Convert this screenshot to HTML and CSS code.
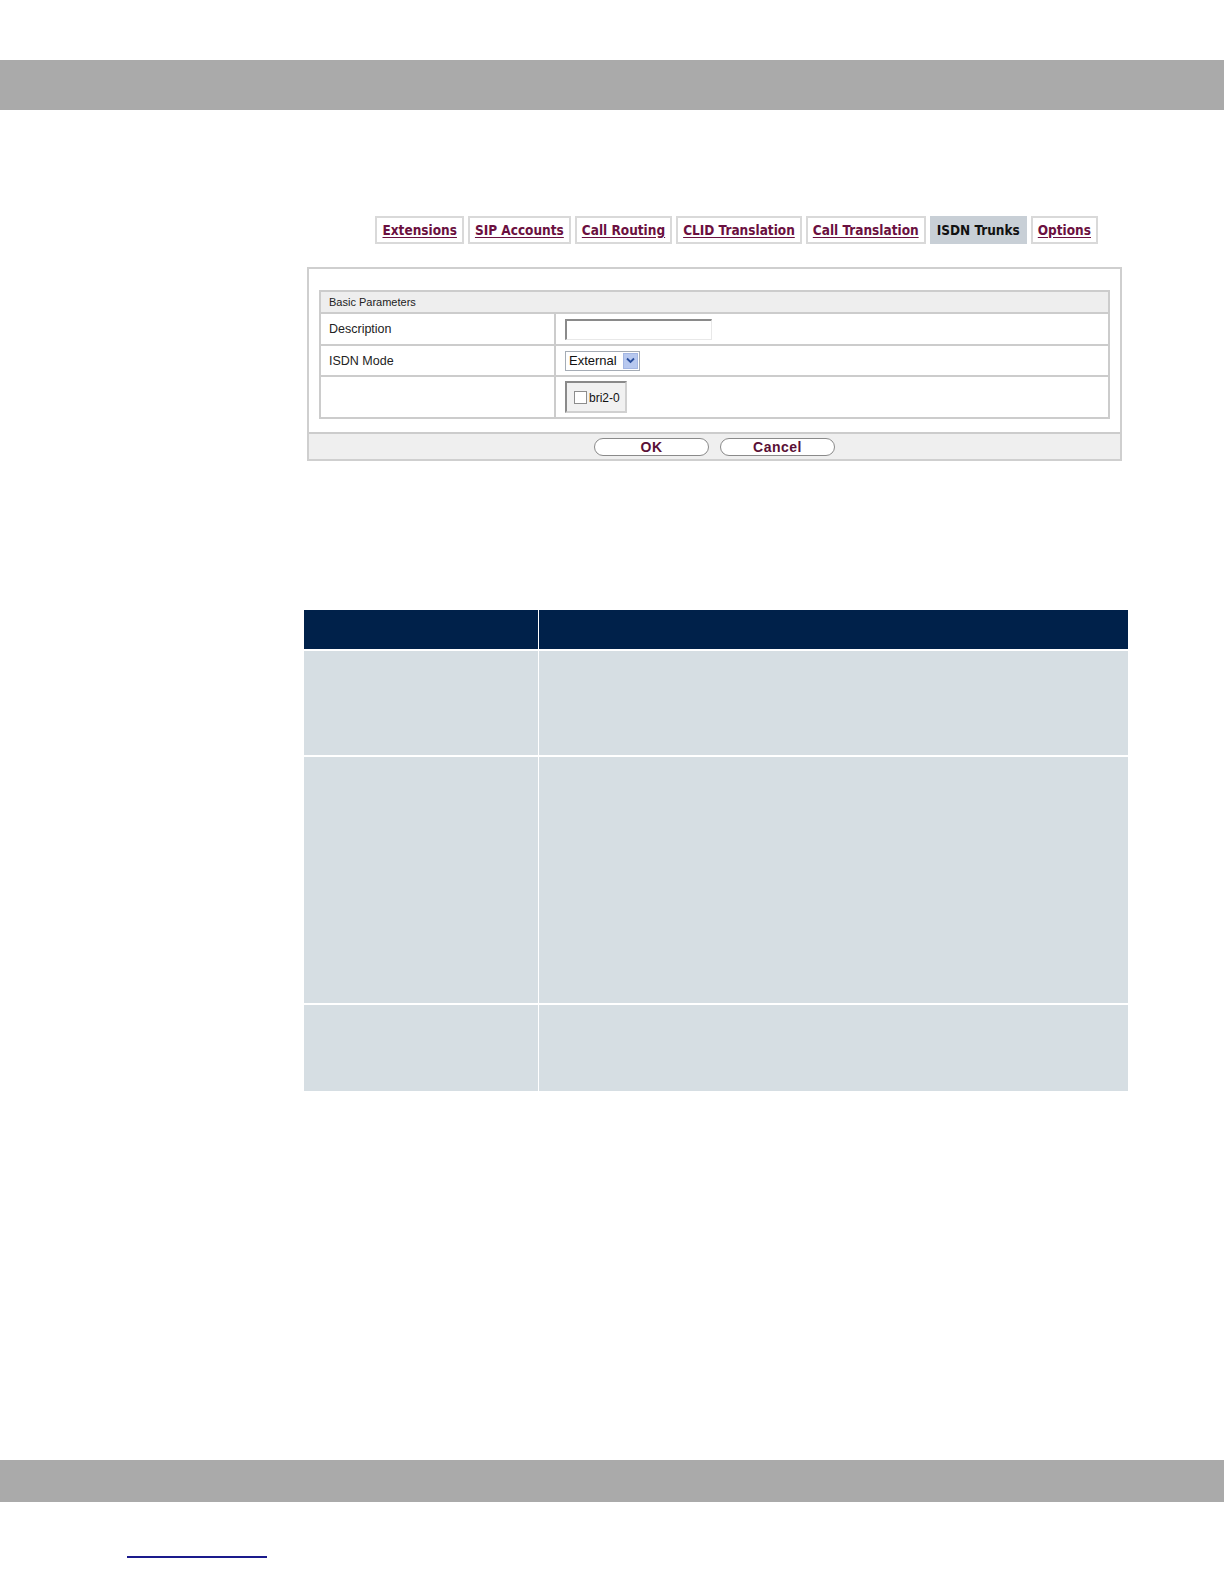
FILE: index.html
```html
<!DOCTYPE html>
<html>
<head>
<meta charset="utf-8">
<title>ISDN Trunks</title>
<link rel="stylesheet" href="styles.css">
</head>
<body>
<div class="top-gap"></div>
<div class="bar"></div>
<div class="content">
  <nav class="tabs">
    <a class="tab" href="#">Extensions</a>
    <a class="tab" href="#">SIP Accounts</a>
    <a class="tab" href="#">Call Routing</a>
    <a class="tab" href="#">CLID Translation</a>
    <a class="tab" href="#">Call Translation</a>
    <span class="tab active">ISDN Trunks</span>
    <a class="tab" href="#">Options</a>
  </nav>
  <div class="formbox">
    <div class="formbody">
      <table class="params">
        <tr><th colspan="2" class="ph">Basic Parameters</th></tr>
        <tr class="r1"><td class="lbl">Description</td><td class="val"><span class="textinput"></span></td></tr>
        <tr class="r2"><td class="lbl">ISDN Mode</td><td class="val"><span class="select"><span class="seltext">External</span><span class="selbtn"><svg width="9" height="7" viewBox="0 0 9 7"><path d="M1 1.5 L4.5 5 L8 1.5" fill="none" stroke="#2a4f9e" stroke-width="1.8"/></svg></span></span></td></tr>
        <tr class="r3"><td class="lbl"></td><td class="val"><span class="cbgroup"><span class="cb"></span><span class="cbl">bri2-0</span></span></td></tr>
      </table>
    </div>
    <div class="formfoot">
      <span class="btn">OK</span>
      <span class="btn">Cancel</span>
    </div>
  </div>
  <table class="dtable">
    <tr class="dh"><td class="c1"></td><td class="c2"></td></tr>
    <tr class="d1"><td class="c1"></td><td class="c2"></td></tr>
    <tr class="d2"><td class="c1"></td><td class="c2"></td></tr>
    <tr class="d3"><td class="c1"></td><td class="c2"></td></tr>
  </table>
</div>
<div class="bar bottom"></div>
<div class="footer"><a class="flink" href="#"></a></div>
</body>
</html>
```

FILE: styles.css
```css
html, body {
  margin: 0;
  padding: 0;
  background: #ffffff;
  font-family: "Liberation Sans", Arial, sans-serif;
}
.top-gap { height: 60px; }
.bar {
  height: 50px;
  background: #aaaaaa;
}
.bar.bottom {
  height: 42px;
}
.content {
  padding: 106px 0 0 307px;
  width: 815px;
  height: 1244px;
  box-sizing: content-box;
}
.tabs {
  display: flex;
  justify-content: flex-end;
  gap: 4px;
  padding-right: 24px;
  height: 28px;
}
.tab {
  display: flex;
  align-items: center;
  box-sizing: border-box;
  height: 28px;
  padding: 0 5px;
  border: 2px solid #d9d9d9;
  background: #ffffff;
  color: #6b1040;
  font-family: "DejaVu Sans Condensed", "DejaVu Sans", sans-serif;
  font-weight: bold;
  font-size: 13.5px;
  text-decoration: underline;
  text-underline-offset: 2px;
}
.tab.active {
  background: #c8cfd6;
  border-color: #c8cfd6;
  color: #111111;
  text-decoration: none;
}
.formbox {
  margin-top: 23px;
  border: 2px solid #cfcfcf;
  box-sizing: border-box;
  height: 194px;
  display: flex;
  flex-direction: column;
}
.formbody {
  padding: 21px 10px 0 10px;
  height: 163px;
  box-sizing: border-box;
}
.params {
  width: 100%;
  border-collapse: collapse;
  border: 2px solid #cccccc;
}
.params td, .params th {
  border: 2px solid #cccccc;
  padding: 0;
}
.ph {
  height: 20px;
  background: #eeeeee;
  text-align: left;
  font-weight: normal;
  font-size: 11px;
  color: #222;
  padding-left: 8px !important;
}
.lbl {
  width: 225px;
  font-size: 12.5px;
  color: #222;
  padding-left: 8px !important;
}
.val {
  padding-left: 9px !important;
}
.r1 { height: 32px; }
.r2 { height: 31px; }
.r3 { height: 42px; }
.textinput {
  display: block;
  width: 147px;
  height: 21px;
  box-sizing: border-box;
  border-top: 2px solid #8a8a8a;
  border-left: 2px solid #8a8a8a;
  border-right: 1px solid #e8e8e8;
  border-bottom: 1px solid #e8e8e8;
  background: #fff;
}
.select {
  display: inline-flex;
  align-items: center;
  height: 20px;
  width: 75px;
  box-sizing: border-box;
  border: 1px solid #a5acb5;
  background: #fff;
  vertical-align: middle;
}
.seltext {
  flex: 1;
  font-size: 13px;
  color: #111;
  padding-left: 3px;
}
.selbtn {
  width: 15px;
  height: 16px;
  margin-right: 1px;
  background: #b7c8ef;
  border: 1px solid #a3b6e3;
  box-sizing: border-box;
  display: flex;
  align-items: center;
  justify-content: center;
}
.cbgroup {
  display: inline-flex;
  align-items: center;
  height: 32px;
  width: 62px;
  box-sizing: border-box;
  border: 2px solid #8a8a8a;
  border-right-color: #d0d0d0;
  border-bottom-color: #d0d0d0;
  background: #f1f1f1;
  padding-left: 7px;
  gap: 2px;
  vertical-align: middle;
}
.cb {
  width: 11px;
  height: 11px;
  border: 1px solid #8d8d8d;
  background: #fff;
}
.cbl {
  font-size: 12px;
  color: #111;
  padding-top: 2px;
}
.formfoot {
  flex: 1;
  border-top: 2px solid #cccccc;
  background: #efefef;
  display: flex;
  align-items: center;
  justify-content: center;
  gap: 11px;
}
.btn {
  width: 115px;
  height: 18px;
  box-sizing: border-box;
  border: 1px solid #8a8a8a;
  border-radius: 10px;
  background: #ffffff;
  color: #5a1036;
  font-weight: bold;
  font-size: 14px;
  letter-spacing: 0.5px;
  display: flex;
  align-items: center;
  justify-content: center;
}
.dtable {
  margin-top: 149px;
  margin-left: -3px;
  width: 824px;
  border-collapse: collapse;
}
.dtable td {
  padding: 0;
}
.dtable .c1 {
  width: 234px;
  border-right: 1px solid #ffffff;
}
.dh td { background: #00214a; height: 39px; }
.d1 td, .d2 td, .d3 td {
  background: #d6dee3;
  border-top: 2px solid #ffffff;
}
.d1 td { height: 104px; }
.d2 td { height: 246px; }
.d3 td { height: 86px; }
.footer {
  height: 82px;
}
.flink {
  display: block;
  margin-left: 127px;
  padding-top: 54px;
  width: 140px;
  border-bottom: 2px solid #1a1a8c;
}
```
